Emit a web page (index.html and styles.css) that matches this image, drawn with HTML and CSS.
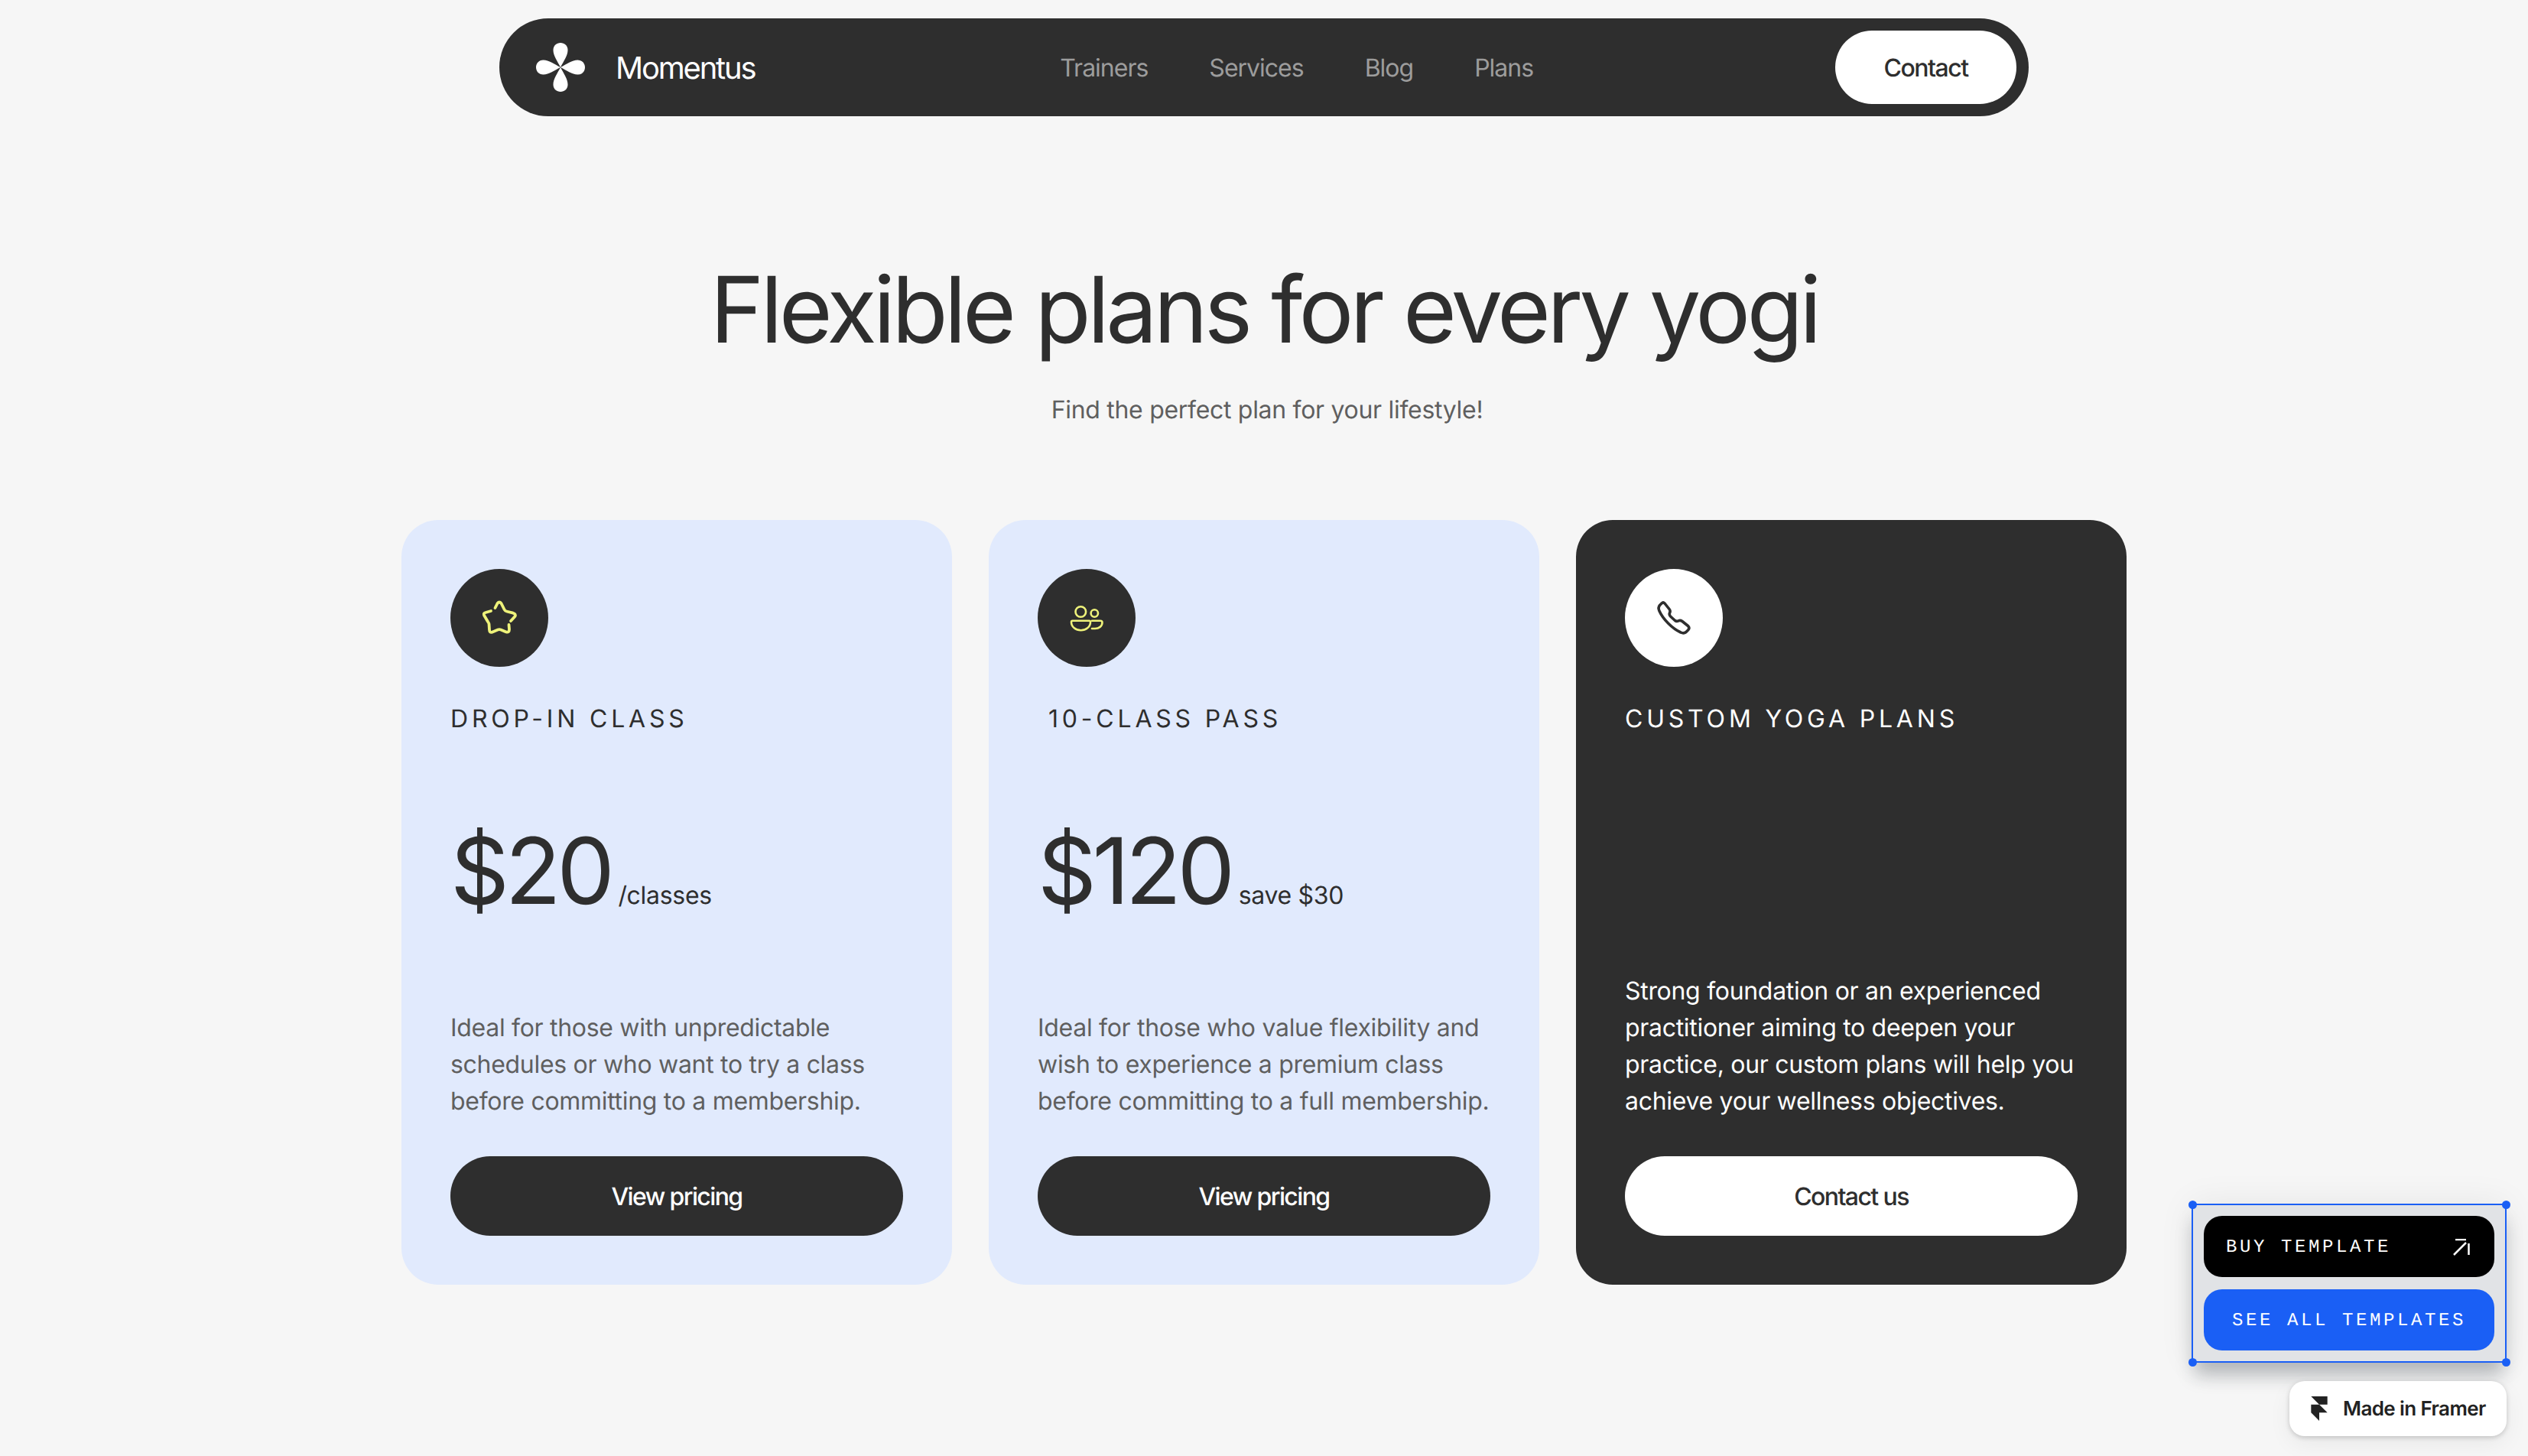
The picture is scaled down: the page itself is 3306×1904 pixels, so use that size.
FILE: index.html
```html
<!DOCTYPE html>
<html lang="en">

<head>
    <meta charset="UTF-8">
    <meta name="viewport" content="width=device-width, initial-scale=1.0">
    <title>Momentus - Plans</title>
    <link rel="stylesheet" href="styles.css">
</head>

<body>
    <!-- Top navigation -->
    <nav class="nav">
        <div class="brand">
            <svg class="brand-logo" viewBox="0 0 64 64" fill="#fff">
                <path d="M32 32C28 24 22.500 17 22.500 9.500C22.500 3.500 27 0 32 0C37 0 41.500 3.500 41.500 9.500C41.500 17 36 24 32 32Z" />
                <path d="M32 32C28 24 22.500 17 22.500 9.500C22.500 3.500 27 0 32 0C37 0 41.500 3.500 41.500 9.500C41.500 17 36 24 32 32Z" transform="rotate(90 32 32)" />
                <path d="M32 32C28 24 22.500 17 22.500 9.500C22.500 3.500 27 0 32 0C37 0 41.500 3.500 41.500 9.500C41.500 17 36 24 32 32Z" transform="rotate(180 32 32)" />
                <path d="M32 32C28 24 22.500 17 22.500 9.500C22.500 3.500 27 0 32 0C37 0 41.500 3.500 41.500 9.500C41.500 17 36 24 32 32Z" transform="rotate(270 32 32)" />
            </svg>
            <span class="brand-name">Momentus</span>
        </div>
        <div class="nav-links">
            <a href="#">Trainers</a>
            <a href="#">Services</a>
            <a href="#">Blog</a>
            <a href="#">Plans</a>
        </div>
        <a class="nav-contact" href="#">Contact</a>
    </nav>

    <header class="intro">
        <h1>Flexible plans for every yogi</h1>
        <p>Find the perfect plan for your lifestyle!</p>
    </header>

    <!-- Pricing cards -->
    <section class="plans">
        <article class="card">
            <div class="card-icon">
                <svg viewBox="0 0 48 48" fill="none" stroke="#eef27a" stroke-width="3.800" stroke-linecap="round" stroke-linejoin="round">
                    <path d="M18.500 11L21.500 5Q24 2 26.500 5L30.500 13Q31.500 15 33.500 15.500L42 17.700Q46 19 44.500 22L39 28" />
                    <path d="M36.500 33L37 39Q37 43.500 33 42.500L26 39.500Q24 38.700 22 39.500L14.500 42.700Q11 43.500 11 39.500L10.500 32Q10 30 9 29L4 20.500Q3 17.500 6 17L13 15" />
                </svg>
            </div>
            <h2 class="card-title">DROP-IN CLASS</h2>
            <div class="price"><span class="amount">$20</span><span class="unit">/classes</span></div>
            <p class="card-text">Ideal for those with unpredictable schedules or who want to try a class before committing to a membership.</p>
            <a class="card-button" href="#">View pricing</a>
        </article>

        <article class="card">
            <div class="card-icon">
                <svg viewBox="0 0 48 48" fill="none" stroke="#eef27a" stroke-width="2.600" stroke-linecap="round" stroke-linejoin="round">
                    <circle cx="16.300" cy="16" r="6.800" />
                    <circle cx="34.300" cy="18" r="4.700" />
                    <path d="M5.500 27.700H27.500Q29 27.700 29 29.500C29 36 23 40.300 16.500 40.300C10 40.300 4 36 4 29.500Q4 27.700 5.500 27.700Z" />
                    <path d="M31 27.700H42Q44.500 27.700 44.500 30C44.500 35 40 38 35 38H31" />
                </svg>
            </div>
            <h2 class="card-title title-shifted">10-CLASS PASS</h2>
            <div class="price"><span class="amount">$120</span><span class="unit">save $30</span></div>
            <p class="card-text">Ideal for those who value flexibility and wish to experience a premium class before committing to a full membership.</p>
            <a class="card-button" href="#">View pricing</a>
        </article>

        <article class="card card-dark">
            <div class="card-icon">
                <svg viewBox="0 0 48 48" fill="none" stroke="#2e2e2e" stroke-width="3.600" stroke-linecap="round" stroke-linejoin="round">
                    <path d="M8 5Q10 3 12 5L18 12.500Q20 15 18.500 17.500Q17.500 19.500 19.500 22L25.500 27.500Q27.500 29 30 27.800Q32.500 26.700 35 28.500L42.500 34.500Q45 37 43 39.500L40 42.500Q37 45 33 43C22 38 10 26 5 15Q3 10.500 5.500 7.500Z" />
                </svg>
            </div>
            <h2 class="card-title">CUSTOM YOGA PLANS</h2>
            <p class="card-text">Strong foundation or an experienced practitioner aiming to deepen your practice, our custom plans will help you achieve your wellness objectives.</p>
            <a class="card-button" href="#">Contact us</a>
        </article>
    </section>

    <!-- Template promo, floats over the page -->
    <div class="promo">
        <span class="handle handle-tl"></span>
        <span class="handle handle-tr"></span>
        <span class="handle handle-bl"></span>
        <span class="handle handle-br"></span>
        <a class="promo-button promo-buy" href="#">
            <span>BUY TEMPLATE</span>
            <svg viewBox="0 0 22 22" fill="none" stroke="#fff" stroke-width="2.500">
                <path d="M3 1H17" />
                <path d="M20.500 6V21" />
                <path d="M1 21L17 5" />
            </svg>
        </a>
        <a class="promo-button promo-all" href="#">SEE ALL TEMPLATES</a>
    </div>

    <a class="framer-badge" href="#">
        <svg viewBox="0 0 24 36" fill="#222">
            <path d="M0 0H24V12H12ZM0 12H12L24 24H12V36L0 24Z" />
        </svg>
        <span>Made in Framer</span>
    </a>
</body>

</html>
```

FILE: styles.css
```css
/* Page */
body {
    margin: 0;
    height: 1904px;
    overflow: hidden;
    position: relative;
    background-color: #f6f6f6;
    color: #2e2e2e;
    font-family: Inter, "Liberation Sans", sans-serif;
    text-rendering: geometricPrecision;
}

a {
    color: inherit;
    text-decoration: none;
}

/* Top navigation */
.nav {
    display: flex;
    align-items: center;
    justify-content: space-between;
    box-sizing: border-box;
    width: 2000px;
    height: 128px;
    margin: 24px auto 0;
    padding: 0 16px 0 48px;
    border-radius: 64px;
    background-color: #2e2e2e;
}

.brand {
    display: flex;
    align-items: center;
    gap: 40px;
}

.brand-logo {
    width: 64px;
    height: 64px;
}

.brand-name {
    font-size: 40px;
    letter-spacing: -2.200px;
    color: #fff;
}

.nav-links {
    display: flex;
    gap: 80px;
    margin-left: 4px;
    font-size: 32px;
    letter-spacing: -1px;
    color: #9c9c9c;
}

.nav-contact {
    display: flex;
    align-items: center;
    justify-content: center;
    width: 237px;
    height: 96px;
    border-radius: 48px;
    background-color: #fff;
    font-size: 32px;
    letter-spacing: -1.500px;
    font-weight: 500;
}

/* Heading */
.intro {
    margin-top: 181px;
    text-align: center;
}

.intro h1 {
    margin: 0;
    font-size: 120px;
    line-height: 144px;
    font-weight: 400;
    letter-spacing: -4.800px;
}

.intro p {
    margin: 35px 0 0;
    padding-left: 8px;
    font-size: 32px;
    line-height: 48px;
    letter-spacing: -0.300px;
    color: #5f5f5f;
}

/* Pricing cards */
.plans {
    display: grid;
    grid-template-columns: repeat(3, 720px);
    gap: 48px;
    justify-content: center;
    margin-top: 120px;
}

.card {
    display: flex;
    flex-direction: column;
    box-sizing: border-box;
    height: 1000px;
    padding: 64px;
    border-radius: 48px;
    background-color: #e1eafd;
}

.card-icon {
    display: flex;
    align-items: center;
    justify-content: center;
    width: 128px;
    height: 128px;
    border-radius: 50%;
    background-color: #2e2e2e;
}

.card-icon svg {
    width: 48px;
    height: 48px;
}

.card-title {
    margin: 44px 0 0;
    font-size: 32px;
    line-height: 48px;
    font-weight: 400;
    letter-spacing: 4.800px;
}

.title-shifted {
    padding-left: 14px;
}

.price {
    display: flex;
    align-items: baseline;
    gap: 10px;
    margin-top: 103px;
}

.amount {
    font-size: 120px;
    line-height: 144px;
    letter-spacing: -5.500px;
}

.unit {
    font-size: 32px;
    letter-spacing: -0.300px;
}

.card-text {
    margin: auto 0 48px;
    font-size: 32px;
    line-height: 48px;
    letter-spacing: -0.300px;
    color: #5f5f5f;
}

.card-button {
    display: flex;
    align-items: center;
    justify-content: center;
    height: 104px;
    border-radius: 52px;
    background-color: #2e2e2e;
    color: #fff;
    font-size: 32px;
    font-weight: 500;
    letter-spacing: -1.600px;
}

.card-dark {
    background-color: #2e2e2e;
    color: #fff;
}

.card-dark .card-icon {
    background-color: #fff;
}

.card-dark .card-text {
    color: #fff;
}

.card-dark .card-button {
    background-color: #fff;
    color: #2e2e2e;
}

/* Template promo */
.promo {
    position: absolute;
    left: 2866px;
    top: 1574px;
    display: flex;
    flex-direction: column;
    gap: 16px;
    box-sizing: border-box;
    width: 412px;
    height: 208px;
    padding: 14px;
    border: 2px solid #1a5ff5;
    background-color: #e1e3e6;
    box-shadow: 0 20px 22px -4px rgba(30, 40, 50, 0.28), 0 0 44px rgba(0, 0, 0, 0.07);
}

.handle {
    position: absolute;
    width: 11px;
    height: 11px;
    border-radius: 50%;
    background-color: #1a5ff5;
}

.handle-tl {
    left: -6.500px;
    top: -6.500px;
}

.handle-tr {
    right: -6.500px;
    top: -6.500px;
}

.handle-bl {
    left: -6.500px;
    bottom: -6.500px;
}

.handle-br {
    right: -6.500px;
    bottom: -6.500px;
}

.promo-button {
    display: flex;
    align-items: center;
    box-sizing: border-box;
    height: 80px;
    padding-top: 2px;
    border-radius: 24px;
    color: #fff;
    font-family: "Liberation Mono", monospace;
    font-size: 24px;
    letter-spacing: 3.600px;
}

.promo-buy {
    justify-content: space-between;
    padding-right: 32px;
    padding-left: 29px;
    background-color: #000;
}

.promo-buy svg {
    width: 22px;
    height: 22px;
}

.promo-all {
    justify-content: center;
    background-color: #1a5ff5;
}

/* Made in Framer badge */
.framer-badge {
    position: absolute;
    left: 2994px;
    top: 1806px;
    display: flex;
    align-items: center;
    gap: 20px;
    box-sizing: border-box;
    width: 284px;
    height: 72px;
    padding-left: 28px;
    border-radius: 20px;
    background-color: #fff;
    box-shadow: 0 2px 6px rgba(0, 0, 0, 0.18), 0 10px 30px rgba(0, 0, 0, 0.06);
    color: #222;
    font-size: 26px;
    font-weight: 600;
    letter-spacing: -0.600px;
}

.framer-badge svg {
    width: 22px;
    height: 32px;
}
```
